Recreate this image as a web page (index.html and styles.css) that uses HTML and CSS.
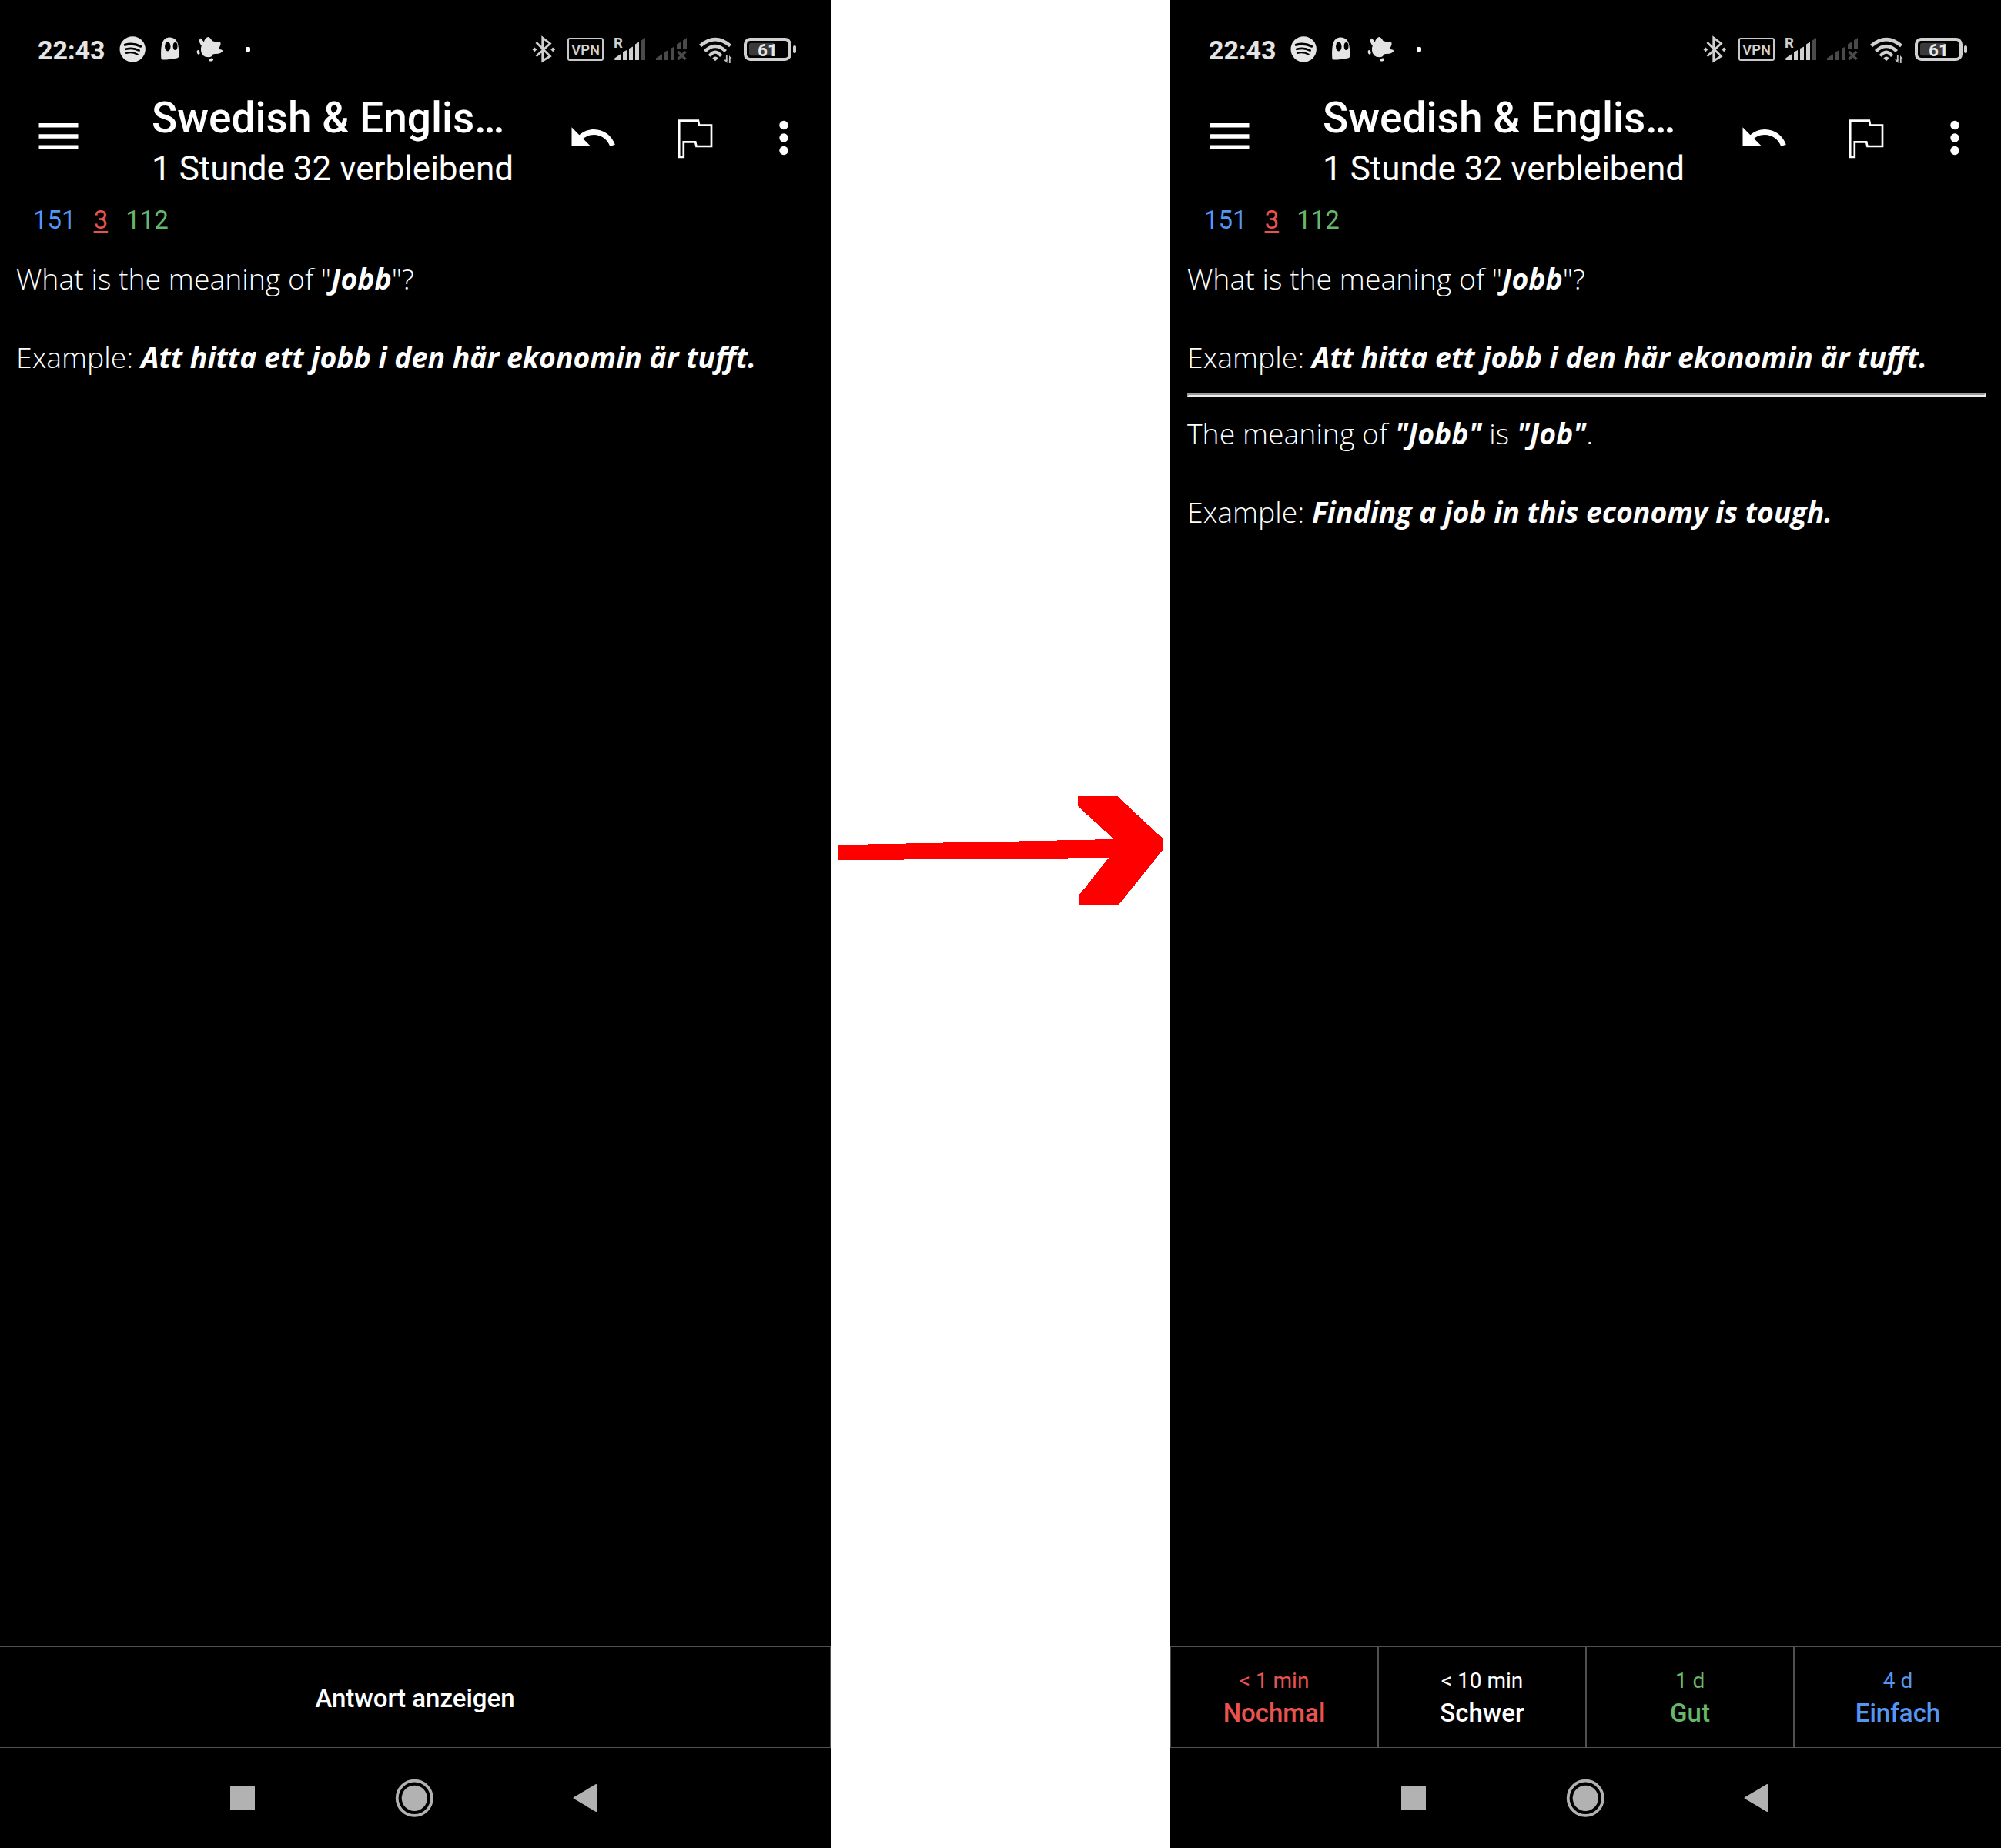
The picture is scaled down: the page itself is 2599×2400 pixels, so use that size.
FILE: index.html
```html
<!DOCTYPE html>
<html lang="de">
<head>
<meta charset="utf-8">
<title>Swedish &amp; English</title>
<link rel="stylesheet" href="styles.css">
</head>
<body>
<svg class="sprite" aria-hidden="true">
  <symbol id="notifications" viewBox="155 40 172 48">
    <g fill="#e4e4e4">
      <circle cx="172.2" cy="63.9" r="16.7"/>
      <path d="M209.3 75.500C208.800 65 209.500 59 211 55C213 50.500 216 48.500 220.500 48.500C226 48.500 230 52 231.200 58C232 63 232.500 67 233 71.500C233.200 74 231.500 75.200 228.500 75.700C223 76.500 217 77.500 212.500 77.600C210.500 77.700 209.400 77 209.300 75.500Z"/>
      <path d="M259.200 51Q260.500 48.500 262.500 51.500L264.800 54.500Q267 48 270.500 48Q273 48.500 275.500 53L280 54.500Q285 53.500 286.500 55.500Q287.200 58 285 61.500L284.500 64Q289.500 64.500 289.200 66.200Q286 70.500 279 70L276.500 70.500Q275.500 74 271 74.300Q262 74.500 261 65.500Q260.500 62 261.800 59.500Q258 55 259.200 51Z"/>
      <ellipse cx="257.600" cy="67.800" rx="1.900" ry="2.900" transform="rotate(-12 257.6 67.8)"/>
      <ellipse cx="274.200" cy="77.600" rx="2.900" ry="1.900" transform="rotate(-12 274.2 77.6)"/>
    </g>
    <g fill="none" stroke="#000" stroke-linecap="round">
      <path d="M162.300 58.200Q173 55.200 182.500 60.200" stroke-width="3.200"/>
      <path d="M163.300 63.800Q173 61.200 180.600 65.500" stroke-width="2.700"/>
      <path d="M164 69Q172 66.800 178.700 70.800" stroke-width="2.200"/>
    </g>
    <ellipse cx="217.800" cy="60.500" rx="3.700" ry="5.900"/>
    <ellipse cx="227.600" cy="60" rx="2.900" ry="5"/>
    <rect x="319" y="61" width="6" height="6" rx="1.500" fill="#fff"/>
  </symbol>
  <symbol id="status" viewBox="690 40 346 48">
    <path d="M696.500 55L714.500 73L704.700 79V49L714.500 56.500L696.500 73" fill="none" stroke="#d0d0d0" stroke-width="2.700"/>
    <path d="M691.500 64.300l2.900-2.900 2.900 2.900-2.900 2.900zM715.300 64.300l2.900-2.900 2.900 2.900-2.900 2.900z" fill="#d0d0d0"/>
    <rect x="738" y="50" width="45" height="28" rx="2" fill="none" stroke="#c8c8c8" stroke-width="2"/>
    <text x="742.300" y="70.700" class="glyph vpn">VPN</text>
    <text x="797" y="62" class="glyph roaming">R</text>
    <path d="M798.300 78V75.500L806 70.300V78zM809 78V67.500L814 65V78zM817 78V63L822 60.500V78zM825 78V57.500L830 54.500V78z" fill="#d0d0d0"/>
    <g fill="#4a4a4a">
      <path d="M833 78V52.500L838 49V78z"/>
      <path d="M852 78V75.500L860 70.300V78zM863 78V67.500L868 65V78zM871 78V63L876 60.500V78zM879 64V57.500L884 54.500V64zM887 64V52.500L892 49V64z"/>
    </g>
    <path d="M880.500 67L890.500 77M890.500 67L880.500 77" fill="none" stroke="#4a4a4a" stroke-width="3.400"/>
    <g fill="none" stroke="#d0d0d0" stroke-width="4.400">
      <path d="M909.500 59.500Q929 42.700 948.500 59.500"/>
      <path d="M915.500 66.500Q929 53.500 942.500 66.500"/>
      <path d="M921.300 72.800Q929 62.500 936.700 72.800"/>
    </g>
    <path d="M925.300 75.500Q929 71.300 933 75.500L929 79.300Z" fill="#d0d0d0"/>
    <path d="M943.800 72V79M947.800 75V82" fill="none" stroke="#c0c0c0" stroke-width="1.800"/>
    <path d="M940 77.500H944.500V82zM947 72V76.500H951z" fill="#c0c0c0"/>
    <rect x="968" y="51" width="58" height="26" rx="6.500" fill="none" stroke="#d0d0d0" stroke-width="4"/>
    <path d="M975.500 55.700H1005V72.300H975.500Q973 72.300 973 69.800V58.200Q973 55.700 975.500 55.700Z" fill="#3a3a3a"/>
    <rect x="1030" y="59" width="4" height="10" rx="2" fill="#d0d0d0"/>
    <text x="984" y="72.500" class="glyph level">61</text>
  </symbol>
  <symbol id="menu" viewBox="0 0 66 66">
    <path d="M7.500 16h51v5.500h-51zM7.500 30.200h51v5.500h-51zM7.500 44.600h51v5.500h-51z" fill="#fff"/>
  </symbol>
  <symbol id="undo" viewBox="0 0 24 24">
    <path d="M12.500 8c-2.650 0-5.050.99-6.900 2.600L2 7v9h9l-3.620-3.620c1.390-1.160 3.160-1.880 5.120-1.880 3.540 0 6.550 2.310 7.600 5.500l2.370-.78C21.080 11.030 17.150 8 12.500 8z" fill="#fff"/>
  </symbol>
  <symbol id="flag" viewBox="871 146 66 66">
    <path d="M883.200 156.700H907.900L909.100 162.500H925V190H905.400L904.200 184.400H888.800V204H883.200Z" fill="none" stroke="#fff" stroke-width="2.700"/>
  </symbol>
  <symbol id="more" viewBox="986 146 66 66">
    <circle cx="1019" cy="162.500" r="5.700" fill="#fff"/>
    <circle cx="1019" cy="179" r="5.700" fill="#fff"/>
    <circle cx="1019" cy="195.500" r="5.700" fill="#fff"/>
  </symbol>
  <symbol id="recents" viewBox="0 0 32 32"><rect width="32" height="32" rx="1.500" fill="#b2b2b2"/></symbol>
  <symbol id="home" viewBox="0 0 50 50">
    <circle cx="25.300" cy="25.300" r="22.600" fill="none" stroke="#b2b2b2" stroke-width="3.800"/>
    <circle cx="25.300" cy="25.300" r="16.600" fill="#b2b2b2"/>
  </symbol>
  <symbol id="back" viewBox="0 0 32 38">
    <path d="M29.500 1.300Q31.300 .300 31.300 2.300V35.700Q31.300 37.700 29.500 36.700L1.300 20Q-.3 19 1.300 18Z" fill="#b2b2b2"/>
  </symbol>
</svg>

<main class="board">
  <section class="frame">
    <div class="phone">
      <header class="statusbar">
        <span class="clock">22:43</span>
        <svg class="notifications"><use href="#notifications"/></svg>
        <svg class="status"><use href="#status"/></svg>
      </header>
      <div class="appbar">
        <svg class="action menu"><use href="#menu"/></svg>
        <div class="heading">
          <div class="title">Swedish &amp; Englis…</div>
          <div class="subtitle">1 Stunde 32 verbleibend</div>
        </div>
        <svg class="action undo"><use href="#undo"/></svg>
        <svg class="action flag"><use href="#flag"/></svg>
        <svg class="action more"><use href="#more"/></svg>
      </div>
      <div class="counts"><span class="blue">151</span><span class="red current">3</span><span class="green">112</span></div>
      <article class="card">
        <p>What is the meaning of "<b>Jobb</b>"?</p>
        <p>Example: <b>Att hitta ett jobb i den här ekonomin är tufft.</b></p>
      </article>
      <div class="answers">
        <div class="answer"><span class="label">Antwort anzeigen</span></div>
      </div>
      <nav class="navbar">
        <svg class="recents"><use href="#recents"/></svg>
        <svg class="home"><use href="#home"/></svg>
        <svg class="back"><use href="#back"/></svg>
      </nav>
    </div>
  </section>

  <svg class="arrow" viewBox="0 0 441 2400" shape-rendering="crispEdges">
    <path d="M10 1097.300L367 1090L367 1089L321 1047V1034H372L432 1089.500V1103L374 1175H323V1162L361 1114L10 1117.300Z" fill="#f00"/>
  </svg>

  <section class="frame">
    <div class="phone">
      <header class="statusbar">
        <span class="clock">22:43</span>
        <svg class="notifications"><use href="#notifications"/></svg>
        <svg class="status"><use href="#status"/></svg>
      </header>
      <div class="appbar">
        <svg class="action menu"><use href="#menu"/></svg>
        <div class="heading">
          <div class="title">Swedish &amp; Englis…</div>
          <div class="subtitle">1 Stunde 32 verbleibend</div>
        </div>
        <svg class="action undo"><use href="#undo"/></svg>
        <svg class="action flag"><use href="#flag"/></svg>
        <svg class="action more"><use href="#more"/></svg>
      </div>
      <div class="counts"><span class="blue">151</span><span class="red current">3</span><span class="green">112</span></div>
      <article class="card">
        <p>What is the meaning of "<b>Jobb</b>"?</p>
        <p>Example: <b>Att hitta ett jobb i den här ekonomin är tufft.</b></p>
        <hr>
        <p>The meaning of <b>"Jobb"</b> is <b>"Job"</b>.</p>
        <p>Example: <b>Finding a job in this economy is tough.</b></p>
      </article>
      <div class="answers">
        <div class="answer red"><span class="time">&lt; 1 min</span><span class="label">Nochmal</span></div>
        <div class="answer"><span class="time">&lt; 10 min</span><span class="label">Schwer</span></div>
        <div class="answer green"><span class="time">1 d</span><span class="label">Gut</span></div>
        <div class="answer blue"><span class="time">4 d</span><span class="label">Einfach</span></div>
      </div>
      <nav class="navbar">
        <svg class="recents"><use href="#recents"/></svg>
        <svg class="home"><use href="#home"/></svg>
        <svg class="back"><use href="#back"/></svg>
      </nav>
    </div>
  </section>
</main>
</body>
</html>
```
FILE: styles.css
```css
* { box-sizing: border-box; }

body {
  margin: 0;
  background: #fff;
  font-family: Roboto, "Liberation Sans", sans-serif;
  color: #fff;
}

svg { display: block; flex: none; }
.sprite { display: none; }

.board {
  display: flex;
  width: 2599px;
  height: 2400px;
  overflow: hidden;
}

.frame {
  display: flex;
  flex: none;
  width: 1079px;
  height: 2400px;
  overflow: hidden;
  background: #000;
}

.phone {
  display: flex;
  flex: none;
  flex-direction: column;
  width: 1080px;
  height: 2400px;
}

/* The first screen is cut by one pixel at its left edge. */
.frame:first-child { justify-content: flex-end; }

.arrow { width: 441px; height: 2400px; }

/* Status bar */
.statusbar {
  display: flex;
  align-items: flex-start;
  height: 121px;
  padding: 40px 43px 0 50px;
}
.clock {
  width: 106px;
  padding-top: 5px;
  font-size: 34px;
  font-weight: 700;
  line-height: 40px;
  color: #e4e4e4;
}
.notifications { width: 172px; height: 48px; }
.status { width: 346px; height: 48px; margin-left: auto; }
.glyph { font-family: Roboto, sans-serif; fill: #d0d0d0; }
.vpn { font-size: 18.3px; font-weight: 600; }
.roaming { font-size: 18.5px; font-weight: 700; }
.level { font-size: 22.5px; font-weight: 700; fill: #e8e8e8; }

/* App bar */
.appbar { display: flex; height: 145px; }
.action { width: 66px; height: 66px; margin-top: 25px; }
.menu { margin: 23px 0 0 44px; }
.heading {
  width: 540px;
  padding-left: 88px;
}
.title {
  font-size: 55px;
  font-weight: 500;
  line-height: 64px;
  white-space: nowrap;
}
.subtitle {
  margin-top: 8px;
  font-size: 44px;
  line-height: 52px;
  white-space: nowrap;
}
.undo { margin-left: 88px; }
.flag { margin-left: 67px; }
.more { margin-left: 49px; }

/* Counters */
.counts {
  display: flex;
  gap: 23px;
  height: 70px;
  padding-left: 44px;
  font-size: 33px;
  line-height: 39px;
}
.current {
  text-decoration: underline;
  text-decoration-thickness: 2px;
  text-underline-offset: 3px;
}
.blue { color: #5596f1; }
.red { color: #e85350; }
.green { color: #66b66b; }

/* Card */
.card {
  flex: 1;
  padding: 0 21px 0 22px;
  font-family: "Open Sans", "Noto Sans", sans-serif;
  font-size: 37.4px;
  font-weight: 300;
  line-height: 51px;
}
.card p { margin: 0; white-space: nowrap; }
.card p + p { margin-top: 51px; }
.card b { font-style: italic; font-weight: 700; }
.card hr {
  height: 4px;
  margin: 22px 0;
  border: 2px solid;
  border-color: #9a9a9a #ededed #ededed #9a9a9a;
}

/* Answer buttons */
.answers { display: flex; height: 132px; }
.answer {
  display: flex;
  flex: 1;
  flex-direction: column;
  align-items: center;
  justify-content: center;
  gap: 6px;
  padding-top: 3px;
  border: 1px solid #505050;
}
.time { font-size: 28px; line-height: 32px; }
.label { font-size: 33px; font-weight: 500; line-height: 39px; }

/* Navigation bar */
.navbar { display: flex; height: 130px; }
.recents { width: 32px; height: 32px; margin: 49px 0 0 300px; }
.home { width: 50px; height: 50px; margin: 40px 0 0 182px; }
.back { width: 32px; height: 38px; margin: 46px 0 0 181px; }
```
